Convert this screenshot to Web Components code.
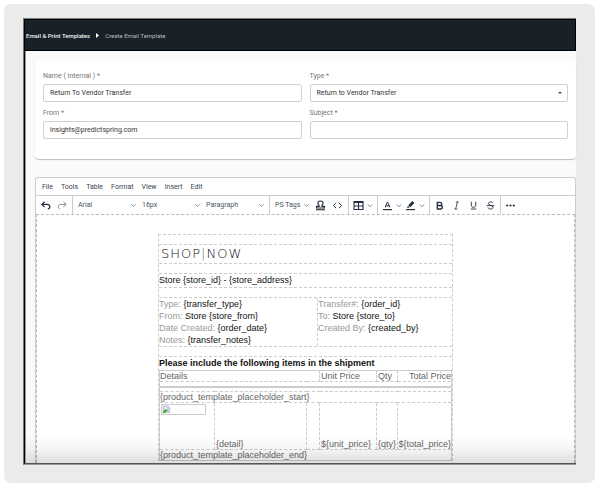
<!DOCTYPE html>
<html lang="en">
<head>
<meta charset="utf-8">
<title>Create Email Template</title>
<style>
    body {
        margin: 4px 5px 3px 4px;
        background: white;
        font-family: Roboto, sans-serif;
        font-size: 7px;
    }
</style>
</head>
<body>
<app-frame>
    <page-header>
        <a slot="parent" href="#templates">Email &amp; Print Templates</a>
        <span slot="current">Create Email Template</span>
    </page-header>
    <page-content>
        <form-card>
            <text-field label="Name ( Internal ) *" value="Return To Vendor Transfer"></text-field>
            <select-field label="Type *" value="Return to Vendor Transfer"></select-field>
            <text-field label="From *" value="insights@predictspring.com"></text-field>
            <text-field label="Subject *" value=""></text-field>
        </form-card>
        <rich-editor>
            <email-template></email-template>
        </rich-editor>
    </page-content>
</app-frame>

<script>
class AppFrame extends HTMLElement {
    constructor() {
        super();

        this.attachShadow({ mode: 'open' });
        this.shadowRoot.innerHTML = `
            <style>
                :host {
                    display: block;
                    padding: 14px 19px 18px;
                    border-radius: 7px;
                    background: #ebebe9;
                }
                #screen {
                    position: relative;
                    border-top: 1px solid #74787a;
                    border-left: 1px solid #777;
                    border-bottom: 1px solid #999;
                    background: #fafafa;
                }
                #edge {
                    border-left: 1px solid black;
                    border-bottom: 1px solid #555;
                }
                #fade {
                    position: absolute;
                    left: 2px;
                    right: 0;
                    bottom: 1px;
                    height: 28px;
                    background: linear-gradient(rgba(0, 0, 0, 0), rgba(0, 0, 0, 0.04) 50%, rgba(0, 0, 0, 0.13));
                    pointer-events: none;
                }
            </style>
            <div id="screen">
                <div id="edge"><slot></slot></div>
                <div id="fade"></div>
            </div>
        `;
    }
}

class PageHeader extends HTMLElement {
    constructor() {
        super();

        this.attachShadow({ mode: 'open' });
        this.shadowRoot.innerHTML = `
            <style>
                :host {
                    display: block;
                    border: 1px solid black;
                    border-left: 0;
                    background: #172127;
                    color: #b9bdbf;
                    font-size: 6px;
                }
                nav {
                    display: flex;
                    align-items: center;
                    gap: 6px;
                    height: 30px;
                    padding-left: 1px;
                }
                svg {
                    width: 3px;
                    height: 5px;
                    fill: white;
                }
                ::slotted(a) {
                    color: #f1f2f2;
                    font-weight: 500;
                    text-decoration: none;
                }
            </style>
            <nav aria-label="Breadcrumb">
                <slot name="parent"></slot>
                <svg viewBox="0 0 3 5"><path d="M0 0l3 2.5L0 5z"/></svg>
                <slot name="current"></slot>
            </nav>
        `;
    }
}

class PageContent extends HTMLElement {
    constructor() {
        super();

        this.attachShadow({ mode: 'open' });
        this.shadowRoot.innerHTML = `
            <style>
                :host {
                    display: flex;
                    flex-direction: column;
                    gap: 18px;
                    padding: 10px 0 0 9px;
                    border-left: 1px solid #999;
                }
            </style>
            <slot></slot>
        `;
    }
}

class FormCard extends HTMLElement {
    constructor() {
        super();

        this.attachShadow({ mode: 'open' });
        this.shadowRoot.innerHTML = `
            <style>
                :host {
                    display: block;
                    border-radius: 4px;
                    background: white;
                    box-shadow: 0 1px 1px #bdbdbd;
                }
                form {
                    display: grid;
                    grid-template-columns: 1fr 1fr;
                    gap: 7px 8px;
                    padding: 11px 8px 20px;
                }
            </style>
            <form><slot></slot></form>
        `;
    }
}

const fieldStyle = `
    :host {
        display: flex;
        flex-direction: column;
        gap: 4px;
    }
    label {
        color: #757575;
        line-height: 8px;
    }
    input, select {
        box-sizing: border-box;
        width: 100%;
        height: 18px;
        margin: 0;
        padding: 0 6px;
        border: 1px solid #d0d0d0;
        border-radius: 2px;
        background: white;
        color: #333;
        font: inherit;
        appearance: none;
    }
`;

class TextField extends HTMLElement {
    constructor() {
        super();

        this.attachShadow({ mode: 'open' });
        this.shadowRoot.innerHTML = `
            <style>${fieldStyle}</style>
            <label for="field"></label>
            <input id="field" type="text">
        `;
    }

    connectedCallback() {
        this.shadowRoot.querySelector('label').textContent = this.getAttribute('label');
        this.shadowRoot.querySelector('input').value = this.getAttribute('value');
    }
}

class SelectField extends HTMLElement {
    constructor() {
        super();

        this.attachShadow({ mode: 'open' });
        this.shadowRoot.innerHTML = `
            <style>
                ${fieldStyle}
                #box {
                    display: grid;
                    align-items: center;
                }
                #box > * {
                    grid-area: 1 / 1;
                }
                svg {
                    justify-self: end;
                    width: 4px;
                    height: 2px;
                    margin-right: 6px;
                    fill: #444;
                    pointer-events: none;
                }
            </style>
            <label for="field"></label>
            <div id="box">
                <select id="field"><option></option></select>
                <svg viewBox="0 0 4 2"><path d="M0 0h4L2 2z"/></svg>
            </div>
        `;
    }

    connectedCallback() {
        this.shadowRoot.querySelector('label').textContent = this.getAttribute('label');
        this.shadowRoot.querySelector('option').textContent = this.getAttribute('value');
    }
}

// drop-down of the toolbar: plain text with a thin chevron at the right
class ToolSelect extends HTMLElement {
    constructor() {
        super();

        this.attachShadow({ mode: 'open' });
        this.shadowRoot.innerHTML = `
            <style>
                :host {
                    display: grid;
                    align-items: center;
                    color: #4a5460;
                }
                select, svg {
                    grid-area: 1 / 1;
                }
                select {
                    width: 100%;
                    margin: 0;
                    padding: 0;
                    border: 0;
                    background: none;
                    color: inherit;
                    font: inherit;
                    appearance: none;
                }
                svg {
                    justify-self: end;
                    width: 5px;
                    height: 3px;
                    fill: none;
                    stroke: #66707a;
                    pointer-events: none;
                }
            </style>
            <select><option></option></select>
            <svg viewBox="0 0 5 3"><path d="M.4 .3l2.1 2.1L4.6 .3" stroke-width=".8"/></svg>
        `;
    }

    connectedCallback() {
        this.shadowRoot.querySelector('option').textContent = this.getAttribute('value');
        this.shadowRoot.querySelector('select').setAttribute('aria-label', this.getAttribute('label'));
    }
}

const icons = {
    undo: '<path d="M4.6 1.8L1.8 4.4l2.8 2.7M2 4.4h5.2c3.2 0 3.5 4 .6 4.6" fill="none" stroke="currentColor" stroke-width="1.2"/>',
    redo: '<path d="M6.4 1.8l2.8 2.6-2.8 2.7M9 4.4H3.8C.6 4.4.3 8.4 3.2 9" fill="none" stroke="currentColor" stroke-width=".8"/>',
    stamp: '<path d="M1.5 8V6.400h2.700C4.200 4.800 2.900 4.500 2.900 3.100c0-2.800 5.200-2.800 5.200 0 0 1.400-1.300 1.700-1.300 3.300h2.700V8z" fill="none" stroke="currentColor" stroke-width="1.1"/><path d="M1 9.200h9v1.100H1z"/>',
    code: '<path d="M4.1 2.8L1.4 5.5l2.7 2.7M6.900 2.800l2.700 2.700-2.700 2.700" fill="none" stroke="currentColor"/>',
    table: '<path d="M1 1.500h9v8H1zM1 2.500h9M1 6h9M5.500 2.300v7" fill="none" stroke="currentColor" stroke-width="1.1"/>',
    color: '<path d="M1 9h9v1.200H1z"/><path d="M3.200 7.300l2-5h.6l2 5M3.900 5.800h3.200" fill="none" stroke="currentColor"/>',
    highlight: '<path d="M1 9h9v1.200H1z"/><path d="M3.300 5.200L7.400 1l2 1.900-4.100 4.300zM2.900 5.800l1.700 1.700-2.500.4z"/>',
    bold: '<path d="M3.300 2.300h2.800c2.300 0 2.300 3.200 0 3.200H3.300zm0 3.200h3c2.700 0 2.700 3.500 0 3.500h-3z" fill="none" stroke="currentColor" stroke-width="1.3"/>',
    italic: '<path d="M4.800 2h3M3.300 9h3M6.400 2L4.700 9" fill="none" stroke="currentColor" stroke-width=".8"/>',
    underline: '<path d="M3.300 1.800v3.300c0 3 4.400 3 4.400 0V1.800M2.800 9h5.400" fill="none" stroke="currentColor" stroke-width=".9"/>',
    strike: '<path d="M8 3.200C7.300 1.300 3.400 1.400 3.400 3.600c0 2.300 4.600 1.200 4.600 3.700C8 9.600 3.700 9.600 3 7.600M1.700 5.600h7.600" fill="none" stroke="currentColor" stroke-width=".9"/>',
    more: '<circle cx="2.2" cy="5.5" r="1.1"/><circle cx="5.5" cy="5.5" r="1.1"/><circle cx="8.8" cy="5.5" r="1.1"/>',
    chevron: '<path d="M.7 4.500l2.300 2.200 2.300-2.200" fill="none" stroke="currentColor" stroke-width=".8"/>'
};

class ToolButton extends HTMLElement {
    constructor() {
        super();

        this.attachShadow({ mode: 'open' });
        this.shadowRoot.innerHTML = `
            <style>
                :host {
                    display: block;
                }
                button {
                    display: block;
                    margin: 0;
                    padding: 0;
                    border: 0;
                    background: none;
                    color: inherit;
                }
                svg {
                    display: block;
                    height: 11px;
                    fill: currentColor;
                }
            </style>
            <button type="button"></button>
        `;
    }

    connectedCallback() {
        const button = this.shadowRoot.querySelector('button');
        const icon = this.getAttribute('icon');
        const width = icon === 'chevron' ? 6 : 11;
        button.setAttribute('aria-label', icon);
        button.innerHTML = `<svg width="${width}" viewBox="0 0 ${width} 11">${icons[icon]}</svg>`;
    }
}

class RichEditor extends HTMLElement {
    constructor() {
        super();

        this.attachShadow({ mode: 'open' });
        this.shadowRoot.innerHTML = `
            <style>
                :host {
                    display: block;
                    border: 1px solid #ccc;
                    border-bottom: 0;
                    border-radius: 3px 3px 0 0;
                    background: white;
                    color: #222f3e;
                }
                #menu {
                    display: flex;
                    align-items: center;
                    gap: 8px;
                    height: 17px;
                    padding-left: 6px;
                    border-bottom: 1px solid #ccc;
                }
                #menu button {
                    margin: 0;
                    padding: 0;
                    border: 0;
                    background: none;
                    color: #3c4652;
                    font: inherit;
                }
                #toolbar {
                    display: flex;
                    height: 18px;
                }
                .group {
                    display: flex;
                    align-items: center;
                    gap: 6px;
                    padding: 0 4px;
                    border-right: 1px solid #ccc;
                }
                .group.selects {
                    padding: 0 5px;
                }
                .group.colors {
                    gap: 3px;
                }
                .group:last-child {
                    border-right: 0;
                }
                .font {
                    width: 58px;
                }
                .tags {
                    width: 34px;
                }
                .light {
                    color: #66707a;
                }
                #canvas {
                    padding: 19px 0 2px;
                    border: 1px dashed #bbb;
                    border-bottom: 0;
                }
            </style>
            <div id="menu">
                <button type="button">File</button>
                <button type="button">Tools</button>
                <button type="button">Table</button>
                <button type="button">Format</button>
                <button type="button">View</button>
                <button type="button">Insert</button>
                <button type="button">Edit</button>
            </div>
            <div id="toolbar">
                <div class="group">
                    <tool-button icon="undo"></tool-button>
                    <tool-button icon="redo" class="light"></tool-button>
                </div>
                <div class="group selects">
                    <tool-select class="font" label="Font" value="Arial"></tool-select>
                    <tool-select class="font" label="Font size" value="16px"></tool-select>
                    <tool-select class="font" label="Block" value="Paragraph"></tool-select>
                </div>
                <div class="group selects">
                    <tool-select class="tags" label="Tags" value="PS Tags"></tool-select>
                    <tool-button icon="stamp"></tool-button>
                    <tool-button icon="code"></tool-button>
                </div>
                <div class="group colors">
                    <tool-button icon="table"></tool-button>
                    <tool-button icon="chevron" class="light"></tool-button>
                </div>
                <div class="group colors">
                    <tool-button icon="color"></tool-button>
                    <tool-button icon="chevron" class="light"></tool-button>
                    <tool-button icon="highlight"></tool-button>
                    <tool-button icon="chevron" class="light"></tool-button>
                </div>
                <div class="group">
                    <tool-button icon="bold"></tool-button>
                    <tool-button icon="italic"></tool-button>
                    <tool-button icon="underline"></tool-button>
                    <tool-button icon="strike"></tool-button>
                </div>
                <div class="group">
                    <tool-button icon="more"></tool-button>
                </div>
            </div>
            <div id="canvas"><slot></slot></div>
        `;
    }
}

class EmailTemplate extends HTMLElement {
    constructor() {
        super();

        this.attachShadow({ mode: 'open' });
        this.shadowRoot.innerHTML = `
            <style>
                :host {
                    display: block;
                    box-sizing: border-box;
                    width: 295px;
                    margin: 0 auto;
                    border: 1px dashed #ccc;
                    border-bottom: 0;
                    color: #111;
                    font-family: "Liberation Sans", sans-serif;
                    font-size: 9px;
                    line-height: 12px;
                }
                .row {
                    border-bottom: 1px dashed #ccc;
                }
                .space {
                    height: 9px;
                }
                #logo {
                    padding: 0 2px;
                    font-family: "DejaVu Sans Light", "DejaVu Sans", sans-serif;
                    font-size: 13px;
                    letter-spacing: 1px;
                    line-height: 18px;
                }
                #logo span {
                    color: #777;
                }
                #store {
                    line-height: 13px;
                }
                #meta {
                    display: grid;
                    grid-template-columns: 158px 1fr;
                }
                #meta div + div {
                    border-left: 1px dashed #ccc;
                }
                p {
                    margin: 0;
                }
                p span {
                    color: #999;
                }
                h2 {
                    margin: 0;
                    font-size: 9px;
                    line-height: 13px;
                }
                table {
                    width: 100%;
                    border: 1px solid #ccc;
                    border-collapse: collapse;
                    table-layout: fixed;
                    color: #666;
                    line-height: 10px;
                }
                th, td {
                    padding: 0 1px;
                    border: 1px dashed #ccc;
                    font-weight: normal;
                    text-align: left;
                    vertical-align: bottom;
                    white-space: nowrap;
                }
                th:first-child, td:first-child {
                    padding: 0;
                }
                .total {
                    padding: 0;
                    text-align: right;
                }
                .rule {
                    height: 9px;
                    vertical-align: middle;
                }
                hr {
                    margin: 0;
                    border: 0;
                    border-top: 2px solid #ccc;
                }
                .product td {
                    height: 46px;
                }
                .product .picture {
                    vertical-align: top;
                }
                .picture div {
                    box-sizing: border-box;
                    width: 45px;
                    height: 11px;
                    margin: 1px;
                    border: 1px solid #ccc;
                }
                .picture svg {
                    display: block;
                    width: 9px;
                    height: 9px;
                }
            </style>
            <div class="row space"></div>
            <div class="row" id="logo">SHOP<span>|</span>NOW</div>
            <div class="row space"></div>
            <div class="row" id="store">Store {store_id} - {store_address}</div>
            <div class="row space"></div>
            <div class="row" id="meta">
                <div>
                    <p><span>Type:</span> {transfer_type}</p>
                    <p><span>From:</span> Store {store_from}</p>
                    <p><span>Date Created:</span> {order_date}</p>
                    <p><span>Notes:</span> {transfer_notes}</p>
                </div>
                <div>
                    <p><span>Transfer#:</span> {order_id}</p>
                    <p><span>To:</span> Store {store_to}</p>
                    <p><span>Created By:</span> {created_by}</p>
                </div>
            </div>
            <div class="row space"></div>
            <h2>Please include the following items in the shipment</h2>
            <table>
                <colgroup>
                    <col style="width: 55px">
                    <col style="width: 92px">
                    <col style="width: 13px">
                    <col style="width: 57px">
                    <col style="width: 21px">
                    <col>
                </colgroup>
                <tr>
                    <th colspan="3">Details</th>
                    <th>Unit Price</th>
                    <th>Qty</th>
                    <th class="total">Total Price</th>
                </tr>
                <tr><td class="rule" colspan="6"><hr></td></tr>
                <tr><td colspan="6">{product_template_placeholder_start}</td></tr>
                <tr class="product">
                    <td class="picture">
                        <div>
                            <svg viewBox="0 0 9 9">
                                <path d="M1 1h5l2 2v2L3 8H1z" fill="#c5d8f5" stroke="#aaa" stroke-width=".5"/>
                                <path d="M1 7c1-3 3-3 5-2L3 8H1z" fill="#4ea82f"/>
                                <path d="M8 5v3H4z" fill="#b8c8dc"/>
                                <circle cx="3.5" cy="3" r="1" fill="white"/>
                            </svg>
                        </div>
                    </td>
                    <td>{detail}</td>
                    <td></td>
                    <td>\${unit_price}</td>
                    <td>{qty}</td>
                    <td class="total">\${total_price}</td>
                </tr>
                <tr><td colspan="6">{product_template_placeholder_end}</td></tr>
            </table>
        `;
    }
}

customElements.define('app-frame', AppFrame);
customElements.define('page-header', PageHeader);
customElements.define('page-content', PageContent);
customElements.define('form-card', FormCard);
customElements.define('text-field', TextField);
customElements.define('select-field', SelectField);
customElements.define('tool-select', ToolSelect);
customElements.define('tool-button', ToolButton);
customElements.define('rich-editor', RichEditor);
customElements.define('email-template', EmailTemplate);
</script>
</body>
</html>
